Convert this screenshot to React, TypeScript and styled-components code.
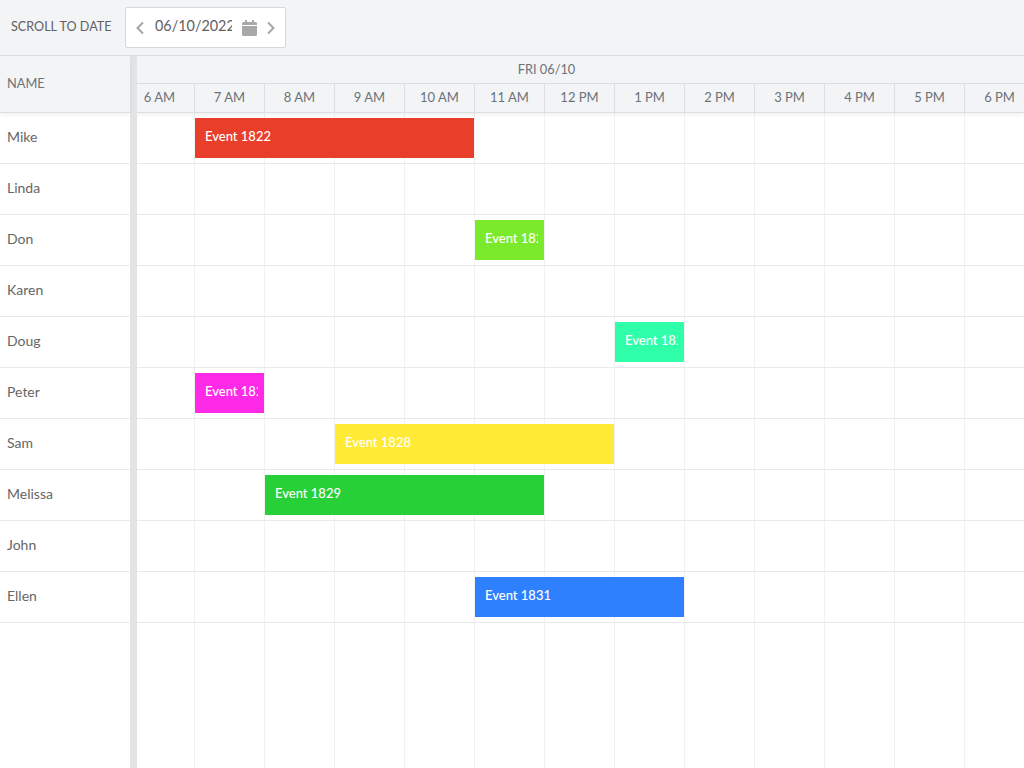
import React from "react";
import styled, { createGlobalStyle } from "styled-components";

const Global = createGlobalStyle`
  html, body { margin: 0; padding: 0; height: 100%; overflow: hidden; }
  body { font-family: Lato, "Liberation Sans", sans-serif; background: #fff; }
  #root { height: 100%; }
`;

const Page = styled.div`
  width: 1024px;
  height: 768px;
  display: flex;
  flex-direction: column;
  overflow: hidden;
`;

const Toolbar = styled.div`
  height: 55px;
  flex: none;
  box-sizing: border-box;
  display: flex;
  align-items: center;
  padding: 0 0 0 11px;
  gap: 13px;
  background: #f3f4f6;
`;

const ToolLabel = styled.span`
  width: 101px;
  margin-bottom: 3px;
  font-size: 12.6px;
  color: #616161;
  text-transform: uppercase;
  white-space: nowrap;
`;

const DateField = styled.div`
  width: 161px;
  height: 41px;
  box-sizing: border-box;
  display: flex;
  align-items: center;
  padding-left: 9px;
  background: #fff;
  border: 1px solid #d5d7da;
  border-radius: 2px;
`;

const Chevron = styled.svg`
  width: 10px;
  height: 14px;
  flex: none;
  margin-top: 1px;
  fill: none;
  stroke: #a5a5a5;
  stroke-width: 2;
`;

const DateText = styled.div`
  width: 77px;
  margin: 0 0 5px 10px;
  overflow: hidden;
  white-space: nowrap;
  font-size: 14.4px;
  color: #616161;
`;

const CalendarIcon = styled.svg`
  width: 15px;
  height: 16px;
  flex: none;
  margin: 1px 9px 0 10px;
  fill: #a8a8a8;
`;

const Scheduler = styled.div`
  flex: 1;
  min-height: 0;
  display: flex;
  border-top: 1px solid #dcdee1;
`;

const LockedColumn = styled.div`
  width: 130px;
  flex: none;
  display: flex;
  flex-direction: column;
`;

const NameHeader = styled.div`
  height: 57px;
  flex: none;
  box-sizing: border-box;
  display: flex;
  align-items: center;
  padding: 0 0 2px 7px;
  font-size: 12.8px;
  color: #6d7278;
  background: #f3f4f6;
  border-bottom: 1px solid #dcdee1;
  box-shadow: 0 2px 4px rgba(0, 0, 0, 0.06);
  position: relative;
`;

const NameRow = styled.div`
  height: 51px;
  flex: none;
  box-sizing: border-box;
  display: flex;
  align-items: center;
  padding: 0 0 3px 7px;
  font-size: 14px;
  color: #666666;
  border-bottom: 1px solid #e9eaeb;
`;

const Splitter = styled.div`
  width: 7px;
  flex: none;
  background: #e2e3e5;
`;

const Timeline = styled.div`
  flex: 1;
  min-width: 0;
  display: flex;
  flex-direction: column;
  overflow: hidden;
`;

const TimeHeader = styled.div`
  flex: none;
  background: #f3f4f6;
  border-bottom: 1px solid #dcdee1;
  box-shadow: 0 2px 4px rgba(0, 0, 0, 0.06);
  position: relative;
`;

const DayCell = styled.div`
  height: 27px;
  width: 819px;
  box-sizing: border-box;
  display: flex;
  align-items: center;
  justify-content: center;
  padding-bottom: 2px;
  font-size: 12.8px;
  color: #6d7278;
`;

const HourRow = styled.div`
  display: grid;
  grid-template-columns: repeat(14, 70px);
  margin-left: -12px;
  height: 28px;
  border-top: 1px solid #dcdee1;
`;

const HourCell = styled.div`
  box-sizing: border-box;
  display: flex;
  align-items: center;
  justify-content: center;
  padding-bottom: 2px;
  font-size: 13px;
  color: #6d7278;
  border-right: 1px solid #dcdee1;
`;

const TimeBody = styled.div`
  flex: 1;
  min-height: 0;
  background-image: repeating-linear-gradient(
    to right,
    transparent 0,
    transparent 69px,
    #f1f1f2 69px,
    #f1f1f2 70px
  );
  background-position: -12px 0;
`;

const EventRow = styled.div`
  height: 51px;
  box-sizing: border-box;
  display: grid;
  grid-template-columns: 58px repeat(13, 70px);
  grid-template-rows: 40px;
  padding-top: 5px;
  border-bottom: 1px solid #e9eaeb;
`;

const EventBar = styled.div<{ $color: string; $from: number; $to: number }>`
  grid-column: ${(p) => p.$from} / ${(p) => p.$to};
  box-sizing: border-box;
  margin-right: 1px;
  padding: 0 6px 0 10px;
  display: flex;
  align-items: center;
  background: ${(p) => p.$color};
  color: #fff;
  font-size: 13px;
  font-weight: 500;
  min-width: 0;
`;

const EventName = styled.span`
  overflow: hidden;
  white-space: nowrap;
  margin-top: -4px;
`;

const hours = ["6 AM", "7 AM", "8 AM", "9 AM", "10 AM", "11 AM", "12 PM", "1 PM", "2 PM", "3 PM", "4 PM", "5 PM", "6 PM", "7 PM"];

type Ev = { name: string; color: string; from: number; to: number };
const rows: { name: string; event?: Ev }[] = [
  { name: "Mike", event: { name: "Event 1822", color: "#e93e2a", from: 2, to: 6 } },
  { name: "Linda" },
  { name: "Don", event: { name: "Event 1824", color: "#7aea2b", from: 6, to: 7 } },
  { name: "Karen" },
  { name: "Doug", event: { name: "Event 1826", color: "#30ffa9", from: 8, to: 9 } },
  { name: "Peter", event: { name: "Event 1827", color: "#ff2ae8", from: 2, to: 3 } },
  { name: "Sam", event: { name: "Event 1828", color: "#ffea35", from: 4, to: 8 } },
  { name: "Melissa", event: { name: "Event 1829", color: "#28d038", from: 3, to: 7 } },
  { name: "John" },
  { name: "Ellen", event: { name: "Event 1831", color: "#2f80ff", from: 6, to: 9 } },
];

export default function App() {
  return (
    <Page>
      <Global />
      <Toolbar>
        <ToolLabel>Scroll to date</ToolLabel>
        <DateField>
          <Chevron viewBox="0 0 10 14">
            <path d="M8 1.500 2.500 7 8 12.500" />
          </Chevron>
          <DateText>06/10/2022</DateText>
          <CalendarIcon viewBox="0 0 15 16">
            <path d="M3 0h2v2h5V0h2v2h1.500A1.500 1.500 0 0 1 15 3.500V5H0V3.500A1.500 1.500 0 0 1 1.500 2H3zM0 6h15v8.500a1.500 1.500 0 0 1-1.500 1.500h-12A1.500 1.500 0 0 1 0 14.500z" />
          </CalendarIcon>
          <Chevron viewBox="0 0 10 14">
            <path d="M2 1.500 7.500 7 2 12.500" />
          </Chevron>
        </DateField>
      </Toolbar>
      <Scheduler>
        <LockedColumn>
          <NameHeader>NAME</NameHeader>
          {rows.map((r) => (
            <NameRow key={r.name}>{r.name}</NameRow>
          ))}
        </LockedColumn>
        <Splitter />
        <Timeline>
          <TimeHeader>
            <DayCell>FRI 06/10</DayCell>
            <HourRow>
              {hours.map((h) => (
                <HourCell key={h}>{h}</HourCell>
              ))}
            </HourRow>
          </TimeHeader>
          <TimeBody>
            {rows.map((r) => (
              <EventRow key={r.name}>
                {r.event && (
                  <EventBar $color={r.event.color} $from={r.event.from} $to={r.event.to}>
                    <EventName>{r.event.name}</EventName>
                  </EventBar>
                )}
              </EventRow>
            ))}
          </TimeBody>
        </Timeline>
      </Scheduler>
    </Page>
  );
}
